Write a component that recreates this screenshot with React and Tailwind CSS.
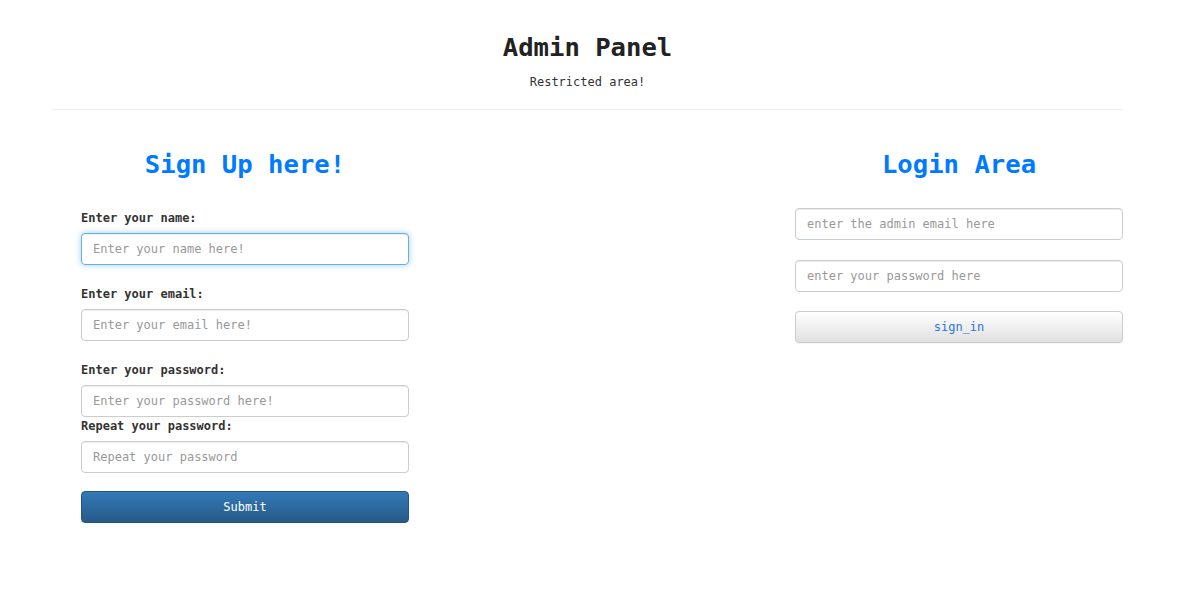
import React from "react";

const mono = "font-['DejaVu_Sans_Mono','Liberation_Mono',monospace]";

const Field = ({ label, placeholder, focused, className = "" }) => (
  <div className={className}>
    {label && (
      <label className="block text-[12px] leading-[18px] font-bold text-[#333]">
        {label}
      </label>
    )}
    <input
      type="text"
      placeholder={placeholder}
      className={
        "block w-full h-8 px-[11px] text-[12px] rounded-[4px] border bg-white text-[#555] placeholder:text-[#999] outline-none " +
        (label ? "mt-[6px] " : "") +
        (focused
          ? "border-[#66afe9] shadow-[inset_0_1px_1px_rgba(0,0,0,0.075),0_0_6px_rgba(102,175,233,0.6)]"
          : "border-[#ccc] shadow-[inset_0_1px_1px_rgba(0,0,0,0.075)]")
      }
    />
  </div>
);

const SignUp = () => (
  <div className="w-[328px] ml-[29px]">
    <h2 className="text-center text-[25.6px] leading-8 font-bold text-[#007bff]">
      Sign Up here!
    </h2>
    <form className="mt-[29px]">
      <Field label="Enter your name:" placeholder="Enter your name here!" focused />
      <Field className="mt-5" label="Enter your email:" placeholder="Enter your email here!" />
      <Field className="mt-5" label="Enter your password:" placeholder="Enter your password here!" />
      <Field label="Repeat your password:" placeholder="Repeat your password" />
      <button
        type="button"
        className="mt-[18px] w-full h-8 rounded-[4px] border border-[#245580] bg-gradient-to-b from-[#337ab7] to-[#265a88] text-white text-[12px]"
      >
        Submit
      </button>
    </form>
  </div>
);

const Login = () => (
  <div className="w-[328px]">
    <h2 className="text-center text-[25.6px] leading-8 font-bold text-[#007bff]">
      Login Area
    </h2>
    <form className="mt-[28px]">
      <Field placeholder="enter the admin email here" />
      <Field className="mt-5" placeholder="enter your password here" />
      <button
        type="button"
        className="mt-[19px] w-full h-8 rounded-[4px] border border-[#ccc] bg-gradient-to-b from-white to-[#e0e0e0] text-[#2a78d6] text-[12px] shadow-[0_1px_1px_rgba(0,0,0,0.05)]"
      >
        sign_in
      </button>
    </form>
  </div>
);

export default function App() {
  return (
    <div className={`${mono} bg-white min-h-[600px] text-[#333]`}>
      <div className="ml-[52px] w-[1071px]">
        <header className="pt-[31px] pb-[19px] text-center border-b border-[#eee]">
          <h1 className="text-[25.6px] leading-8 font-bold text-[#222]">Admin Panel</h1>
          <p className="mt-[11px] text-[12px] leading-4 text-[#333]">Restricted area!</p>
        </header>
        <div className="mt-[38px] flex justify-between">
          <SignUp />
          <Login />
        </div>
      </div>
    </div>
  );
}
